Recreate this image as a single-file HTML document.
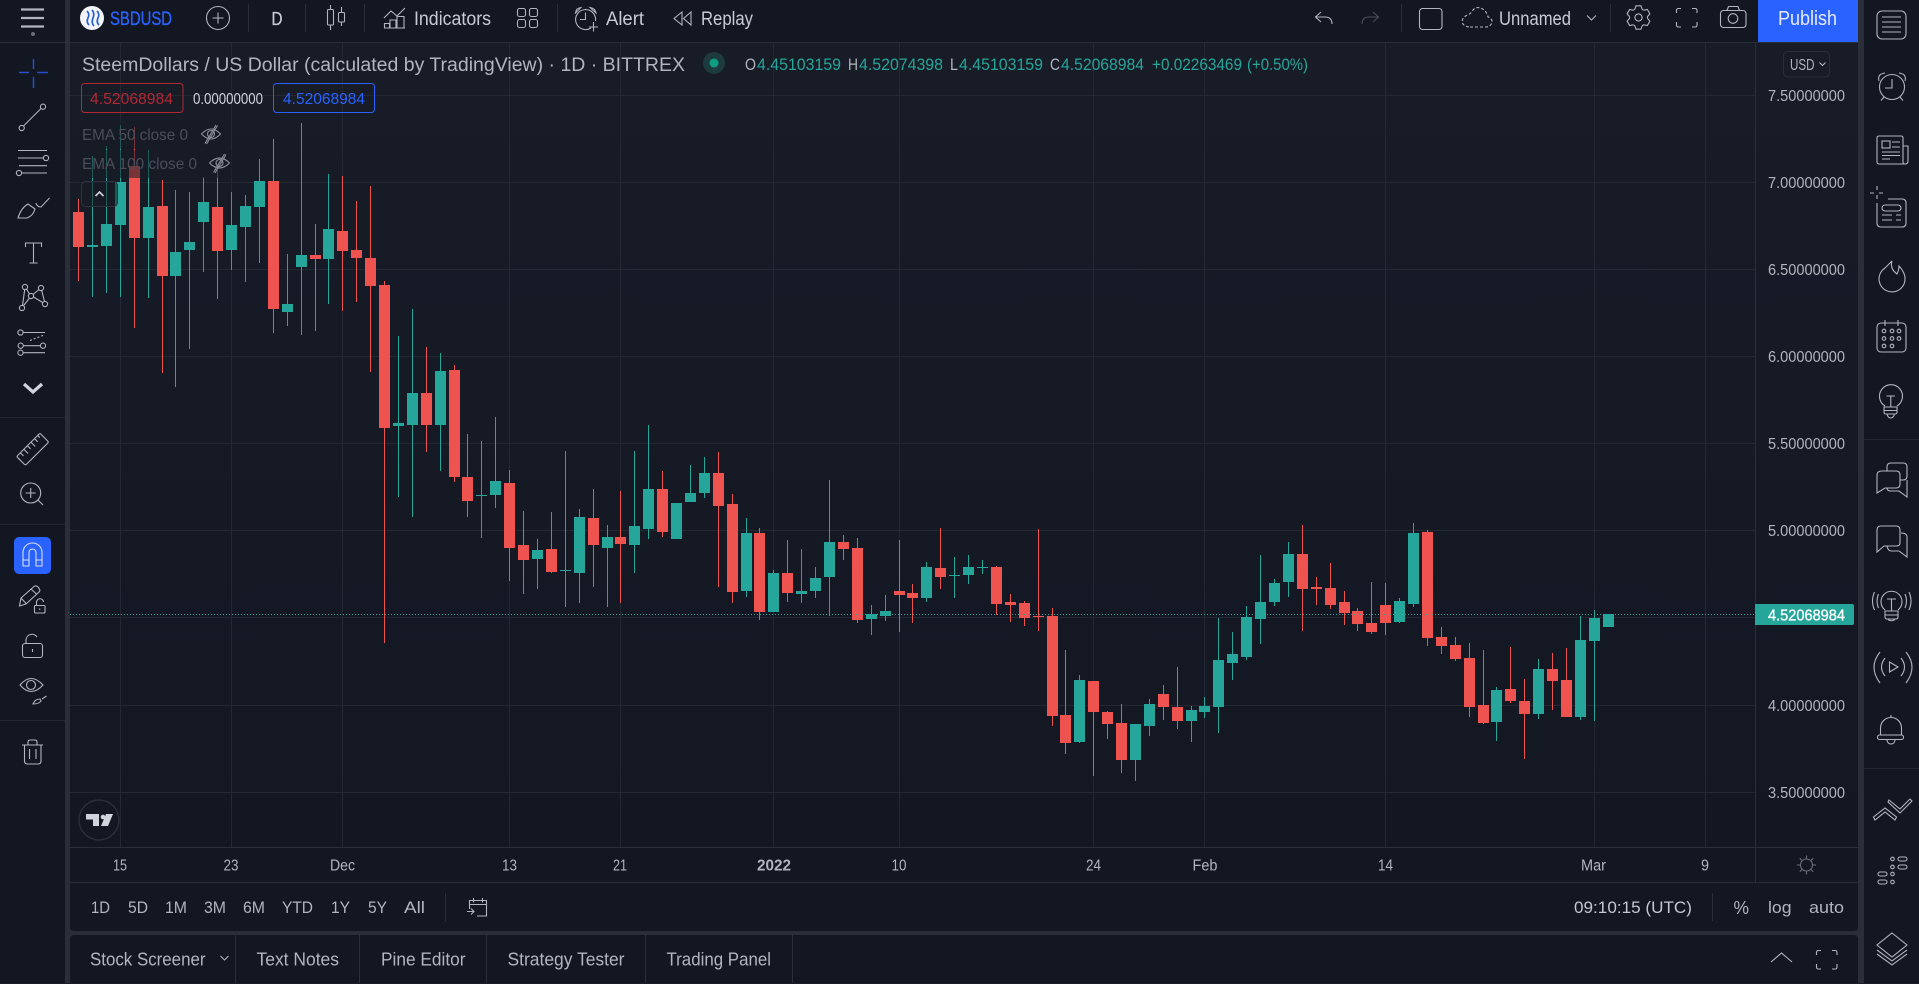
<!DOCTYPE html>
<html lang="en">
<head>
<meta charset="utf-8">
<title>SBDUSD</title>
<style>
html,body{margin:0;padding:0;background:#2a2e39;width:1919px;height:984px;overflow:hidden}
svg{display:block}
text{font-family:"Liberation Sans",Arial,sans-serif;white-space:pre}
.i{fill:none;stroke:#b2b5be;stroke-width:1.1}
.g{stroke:#2a2e39;stroke-width:1;fill:none}
.gs{stroke:#222631;stroke-width:1;fill:none}
.gw{stroke:#242833;stroke-width:1;fill:none;shape-rendering:crispEdges}
.p{font-size:16px;fill:#b2b5be}
.m{font-size:15.5px;fill:#b2b5be;text-anchor:middle}
.r{font-size:17px;fill:#b2b5be}
.b{font-size:18px;fill:#b2b5be}
.tb{font-size:19px;fill:#c8cbd3}
.up{font-size:16.5px;fill:#26a69a}
.lb{font-size:16.5px;fill:#b2b5be}
</style>
</head>
<body>
<svg width="1919" height="984" viewBox="0 0 1919 984" xmlns="http://www.w3.org/2000/svg">
<defs>
<linearGradient id="bg" x1="0" y1="0" x2="0" y2="1"><stop offset="0" stop-color="#181c27"/><stop offset="1" stop-color="#131722"/></linearGradient>
</defs>
<rect width="1919" height="984" fill="#2a2e39"/>
<!-- toolbars -->
<rect x="0" y="0" width="65" height="984" fill="#131722"/>
<rect x="70" y="0" width="1788" height="42" fill="#131722"/>
<rect x="1864" y="0" width="55" height="984" fill="#131722"/>
<!-- chart -->
<rect x="70" y="43" width="1788" height="804" fill="url(#bg)"/>
<rect x="70" y="848" width="1788" height="34" fill="#131722"/>
<path d="M70 883H1858V927q0 4-4 4H74q-4 0-4-4Z" fill="#131722"/>
<path d="M70 984V939q0-4 4-4H1854q4 0 4 4V984Z" fill="#131722"/>
<!-- grid -->
<g class="gw">
<path d="M70 95.5H1755M70 182.5H1755M70 269.5H1755M70 356.5H1755M70 443.5H1755M70 530.5H1755M70 617.5H1755M70 705.5H1755M70 792.5H1755"/>
<path d="M120.5 43V847M231.5 43V847M342.5 43V847M509.5 43V847M620.5 43V847M773.5 43V847M899.5 43V847M1093.5 43V847M1204.5 43V847M1385.5 43V847M1594.5 43V847M1705.5 43V847"/>
</g>
<g style="shape-rendering:crispEdges">
<path class="g" d="M0 42.5H65M70 42.5H1858M70 847.5H1858M70 882.5H1858M1755.5 43V882"/>
<path class="gs" d="M0 417.5H65M0 524.5H65M0 720.5H65M1864 439.5H1919M1864 768.5H1919"/>
<path class="g" d="M445.5 893V921M1712.5 893V921M248.5 4V32M305.5 4V32M364.5 4V32M557.5 4V32M1401.5 4V32M1610.5 4V32M235.5 935V984M359.5 935V984M486.5 935V984M645.5 935V984M792.5 935V984"/>
</g>
<!-- candles -->
<g style="shape-rendering:crispEdges">
<g transform="translate(60 120) scale(.33333)">
<path fill="none" stroke="#26a69a" stroke-width="3" d="M97.5 108V531M139.5 78V519M181.5 15V531M265.5 90V534M346.5 210V801M388.5 216V687M430.5 171V456M514.5 216V450M556.5 225V486M598.5 117V429M682.5 402V618M724.5 9V645M805.5 162V552"/>
<path fill="#26a69a" d="M81 375h33V381h-33zM123 312h33V378h-33zM165 186h33V315h-33zM249 261h33V354h-33zM330 396h33V468h-33zM372 366h33V390h-33zM414 246h33V306h-33zM498 315h33V390h-33zM540 258h33V321h-33zM582 183h33V261h-33zM666 552h33V576h-33zM708 405h33V441h-33zM789 327h33V417h-33z"/>
<path fill="none" stroke="#ef5350" stroke-width="3" d="M55.5 237V483M223.5 21V624M307.5 180V759M472.5 150V537M640.5 57V639M766.5 312V633M847.5 168V573M889.5 243V546M931.5 198V756"/>
<path fill="#ef5350" d="M39 276h33V381h-33zM207 138h33V354h-33zM291 258h33V468h-33zM456 261h33V393h-33zM624 183h33V567h-33zM750 405h33V417h-33zM831 333h33V393h-33zM873 390h33V414h-33zM915 414h33V498h-33z"/>
</g>
<g transform="translate(360 280) scale(.33333)">
<path fill="none" stroke="#26a69a" stroke-width="3" d="M115.5 168V651M157.5 87V711M241.5 219V573M364.5 483V774M406.5 411V684M532.5 777V927M616.5 513V981M658.5 687V969M742.5 735V981M823.5 513V879M865.5 435V777M991.5 555V666M1033.5 531V654M1159.5 714V951M1240.5 870V996M1324.5 807V969M1366.5 861V954M1408.5 600V1008"/>
<path fill="#26a69a" d="M99 429h33V438h-33zM141 339h33V435h-33zM225 273h33V435h-33zM348 645h33V648h-33zM390 603h33V645h-33zM516 810h33V837h-33zM600 870h33V873h-33zM642 711h33V879h-33zM726 771h33V804h-33zM807 738h33V795h-33zM849 627h33V747h-33zM933 669h33V777h-33zM975 639h33V666h-33zM1017 579h33V639h-33zM1143 759h33V933h-33zM1224 879h33V996h-33zM1308 933h33V942h-33zM1350 894h33V933h-33zM1392 786h33V891h-33z"/>
<path fill="none" stroke="#ef5350" stroke-width="3" d="M73.5 3V1089M199.5 201V516M283.5 255V606M322.5 462V711M448.5 570V903M490.5 693V942M574.5 696V879M700.5 627V921M781.5 633V969M907.5 573V771M1075.5 516V921M1117.5 642V969M1198.5 744V1020M1282.5 780V966M1450.5 765V840M1492.5 774V1029"/>
<path fill="#ef5350" d="M57 15h33V444h-33zM183 339h33V435h-33zM267 270h33V591h-33zM306 591h33V663h-33zM432 609h33V804h-33zM474 795h33V840h-33zM558 807h33V876h-33zM684 714h33V795h-33zM765 771h33V792h-33zM891 627h33V756h-33zM1059 579h33V678h-33zM1101 672h33V936h-33zM1182 759h33V996h-33zM1266 879h33V939h-33zM1434 786h33V807h-33zM1476 804h33V1020h-33z"/>
</g>
<g transform="translate(860 500) scale(.33333)">
<path fill="none" stroke="#26a69a" stroke-width="3" d="M34.5 315V405M76.5 285V363M199.5 186V306M283.5 171V294M325.5 165V252M367.5 180V222M658.5 525V729M826.5 672V843M868.5 597V708M994.5 618V726M1033.5 591V654M1075.5 354V699M1117.5 396V540M1159.5 318V480M1201.5 165V432M1243.5 237V318M1285.5 126V291"/>
<path fill="#26a69a" d="M18 342h33V357h-33zM60 333h33V348h-33zM183 201h33V294h-33zM267 225h33V228h-33zM309 201h33V225h-33zM351 201h33V204h-33zM642 540h33V726h-33zM810 672h33V780h-33zM852 612h33V678h-33zM978 630h33V663h-33zM1017 618h33V636h-33zM1059 480h33V621h-33zM1101 462h33V489h-33zM1143 351h33V471h-33zM1185 306h33V357h-33zM1227 249h33V306h-33zM1269 162h33V246h-33z"/>
<path fill="none" stroke="#ef5350" stroke-width="3" d="M118.5 120V396M157.5 252V369M241.5 84V267M409.5 198V345M451.5 282V366M493.5 303V378M535.5 87V393M577.5 324V678M616.5 450V762M700.5 543V828M742.5 633V717M784.5 612V819M910.5 555V660M952.5 501V687M1327.5 75V393M1369.5 231V315M1411.5 189V327M1453.5 273V375M1492.5 324V393M1534.5 246V402"/>
<path fill="#ef5350" d="M102 273h33V285h-33zM141 279h33V294h-33zM225 204h33V231h-33zM393 201h33V312h-33zM435 306h33V315h-33zM477 309h33V354h-33zM519 348h33V351h-33zM561 348h33V648h-33zM600 645h33V729h-33zM684 543h33V636h-33zM726 636h33V672h-33zM768 669h33V780h-33zM894 582h33V621h-33zM936 621h33V663h-33zM1311 162h33V267h-33zM1353 261h33V267h-33zM1395 264h33V315h-33zM1437 306h33V339h-33zM1476 333h33V372h-33zM1518 369h33V396h-33z"/>
</g>
<g transform="translate(1380 500) scale(.33333)">
<path fill="none" stroke="#26a69a" stroke-width="3" d="M58.5 294V369M100.5 69V321M349.5 561V723M475.5 477V657M601.5 348V660M643.5 330V663"/>
<path fill="#26a69a" d="M42 303h33V366h-33zM84 99h33V312h-33zM333 570h33V666h-33zM459 507h33V642h-33zM585 420h33V651h-33zM627 354h33V423h-33zM669 342h33V381h-33z"/>
<path fill="none" stroke="#ef5350" stroke-width="3" d="M16.5 249V405M142.5 90V438M184.5 381V462M226.5 411V483M268.5 429V651M310.5 450V672M391.5 441V609M433.5 537V777M517.5 459V630M559.5 444V651"/>
<path fill="#ef5350" d="M0 315h33V369h-33zM126 96h33V414h-33zM168 411h33V438h-33zM210 435h33V477h-33zM252 474h33V621h-33zM294 615h33V669h-33zM375 567h33V603h-33zM417 603h33V642h-33zM501 507h33V543h-33zM543 540h33V651h-33z"/>
</g>
<path d="M70 614.5H1755" stroke="#26a69a" stroke-width="1" stroke-dasharray="1 2" fill="none"/>
</g>
<!-- legend backdrop -->
<rect x="80" y="121" width="146" height="28" fill="#181c27" fill-opacity=".55"/>
<rect x="80" y="150" width="155" height="28" fill="#181c27" fill-opacity=".55"/>
<rect x="81.5" y="181.5" width="36" height="25" rx="4" fill="#181c27" fill-opacity=".55" stroke="#2f333e"/>
<path d="M95.5 196l4-4 4 4" fill="none" stroke="#d1d4dc" stroke-width="1.6"/>
<!-- top bar: left -->
<g>
<path d="M21 9.5H44M21 18H44M21 26.5H44" stroke="#b2b5be" stroke-width="2.2" fill="none"/>
<circle cx="33" cy="34" r="2" fill="#6a6d78"/>
<circle cx="92" cy="18" r="12" fill="#f3f5fa"/>
<path d="M87 11q3 3 1 7t1 7M92 10q3 3 1 8t1 8M97 11q3 3 1 7t1 7" fill="none" stroke="#2a62c8" stroke-width="1.7"/>
<text x="110" y="25" font-size="19" fill="#2962ff" stroke="#2962ff" stroke-width=".35" textLength="62" lengthAdjust="spacingAndGlyphs">SBDUSD</text>
<circle class="i" cx="218" cy="18" r="11.5"/>
<path class="i" d="M218 12.5V23.5M212.5 18H223.5"/>
<text x="271.5" y="25" font-size="18.5" fill="#c8cbd3" stroke="#c8cbd3" stroke-width=".3" textLength="11" lengthAdjust="spacingAndGlyphs">D</text>
<path class="i" d="M330.5 5V9M330.5 25V30M341.5 7V12M341.5 22V26"/>
<rect class="i" x="327.5" y="9.5" width="6" height="15.5" rx="1"/>
<rect class="i" x="338.5" y="12.5" width="6" height="9.5" rx="1"/>
<path class="i" d="M384 18L391 11L397 16L405 8"/>
<path class="i" d="M384.5 28V23.5H389.5V28M390 28V20H396V28M397 28V16.5H404V28M384 28H405"/>
<text x="414" y="25" class="tb" textLength="77" lengthAdjust="spacingAndGlyphs">Indicators</text>
<rect class="i" x="517.5" y="8.5" width="8" height="8" rx="2"/><rect class="i" x="529.5" y="8.5" width="8" height="8" rx="2"/>
<rect class="i" x="517.5" y="19.5" width="8" height="8" rx="2"/><rect class="i" x="529.5" y="19.5" width="8" height="8" rx="2"/>
<path class="i" d="M591 28A10 10 0 1 1 595.5 21M585.5 12.5V19.5H580M575.5 13Q576 8 581 7.5ZM590 7.5Q595 8 596 13ZM593.5 22V31.5M589 27H598"/>
<text x="606" y="25" class="tb" textLength="38" lengthAdjust="spacingAndGlyphs">Alert</text>
<path class="i" d="M682 12L674 18.5L682 25ZM691 12L683.5 18.5L691 25Z"/>
<text x="701" y="25" class="tb" textLength="52" lengthAdjust="spacingAndGlyphs">Replay</text>
</g>
<!-- top bar: right -->
<g>
<path class="i" d="M1321 12L1315.5 17L1321 22M1316 17H1325Q1332 17 1332 24"/>
<path d="M1373 12L1378.5 17L1373 22M1378 17H1369Q1362 17 1362 24" fill="none" stroke="#4a4e5a" stroke-width="1.1"/>
<rect class="i" x="1419.5" y="8.5" width="22.5" height="21" rx="3" stroke="#9598a1"/>
<path class="i" stroke-dasharray="3 2" d="M1470 27H1486C1492 27 1495 19 1488 17C1487 10 1478 4 1473 10C1471 13 1470 14 1468 15C1460 17 1460 27 1470 27Z"/>
<text x="1499" y="25" class="tb" textLength="72" lengthAdjust="spacingAndGlyphs">Unnamed</text>
<path class="i" d="M1587 15.5L1591.5 20L1596 15.5"/>
<g transform="translate(1638.5 17.5)">
<path class="i" d="M-3.7-8.2L-2.5-11.7H2.5L3.7-8.2L5.25-7.3"/>
<path class="i" transform="rotate(60)" d="M-3.7-8.2L-2.5-11.7H2.5L3.7-8.2L5.25-7.3"/>
<path class="i" transform="rotate(120)" d="M-3.7-8.2L-2.5-11.7H2.5L3.7-8.2L5.25-7.3"/>
<path class="i" transform="rotate(180)" d="M-3.7-8.2L-2.5-11.7H2.5L3.7-8.2L5.25-7.3"/>
<path class="i" transform="rotate(240)" d="M-3.7-8.2L-2.5-11.7H2.5L3.7-8.2L5.25-7.3"/>
<path class="i" transform="rotate(300)" d="M-3.7-8.2L-2.5-11.7H2.5L3.7-8.2L5.25-7.3"/>
<circle class="i" r="3.6"/>
</g>
<path class="i" d="M1676.5 13V10.5q0-2 2-2H1681M1692 8.5h3q2 0 2 2V13M1697 22v3q0 2-2 2h-3M1681 27h-2.5q-2 0-2-2V22"/>
<rect class="i" x="1720.5" y="10.5" width="25.5" height="17" rx="3"/>
<path class="i" d="M1727 10.5l1.5-4h9.500l1.5 4"/>
<circle class="i" cx="1733" cy="18.5" r="4.8"/>
<rect x="1758" y="0" width="100" height="42" fill="#2962ff"/>
<text x="1778" y="25" font-size="20" fill="#e6e9f5" textLength="59" lengthAdjust="spacingAndGlyphs">Publish</text>
</g>
<!-- legend -->
<g>
<text x="82" y="71" font-size="19" fill="#b2b5be" textLength="603" lengthAdjust="spacingAndGlyphs">SteemDollars / US Dollar (calculated by TradingView) · 1D · BITTREX</text>
<circle cx="714" cy="63" r="11" fill="#1d3a3e"/>
<circle cx="714" cy="63" r="4.5" fill="#0e9d80"/>
<text x="745" y="70" class="lb" textLength="11" lengthAdjust="spacingAndGlyphs">O</text>
<text x="757" y="70" class="up" textLength="84" lengthAdjust="spacingAndGlyphs">4.45103159</text>
<text x="848" y="70" class="lb" textLength="10" lengthAdjust="spacingAndGlyphs">H</text>
<text x="859" y="70" class="up" textLength="84" lengthAdjust="spacingAndGlyphs">4.52074398</text>
<text x="950" y="70" class="lb" textLength="8" lengthAdjust="spacingAndGlyphs">L</text>
<text x="959" y="70" class="up" textLength="84" lengthAdjust="spacingAndGlyphs">4.45103159</text>
<text x="1050" y="70" class="lb" textLength="10" lengthAdjust="spacingAndGlyphs">C</text>
<text x="1061" y="70" class="up" textLength="83" lengthAdjust="spacingAndGlyphs">4.52068984</text>
<text x="1152" y="70" class="up" textLength="90" lengthAdjust="spacingAndGlyphs">+0.02263469</text>
<text x="1247" y="70" class="up" textLength="61" lengthAdjust="spacingAndGlyphs">(+0.50%)</text>
<rect x="81.5" y="83.5" width="101.5" height="29" rx="3" fill="none" stroke="#b22833"/>
<text x="90" y="104" font-size="16" fill="#b22833" textLength="83" lengthAdjust="spacingAndGlyphs">4.52068984</text>
<text x="193" y="104" font-size="15.5" fill="#d1d4dc" textLength="70" lengthAdjust="spacingAndGlyphs">0.00000000</text>
<rect x="273.5" y="83.5" width="101" height="29" rx="3" fill="none" stroke="#2962ff"/>
<text x="283" y="104" font-size="16" fill="#2962ff" textLength="82" lengthAdjust="spacingAndGlyphs">4.52068984</text>
<text x="82" y="140" font-size="16" fill="#4a4e59" textLength="106" lengthAdjust="spacingAndGlyphs">EMA 50 close 0</text>
<text x="82" y="169" font-size="16" fill="#4a4e59" textLength="115" lengthAdjust="spacingAndGlyphs">EMA 100 close 0</text>
<g fill="none" stroke="#8d9099" stroke-width="1.1">
<path d="M201.5 134Q211 124 220.500 134Q211 144 201.5 134Z"/><circle cx="211" cy="134" r="3.5"/><path d="M205 143.5L216 125M206.5 144L217.5 125.5"/>
<path d="M209.5 163Q219.5 153 229.5 163Q219.5 173 209.5 163Z"/><circle cx="219.5" cy="163" r="3.5"/><path d="M213.5 172.5L224.5 154M215 173L226 154.5"/>
</g>
</g>
<!-- USD + price scale -->
<rect x="1783.5" y="51.5" width="46" height="25.5" rx="4" fill="none" stroke="#2a2e39"/>
<text x="1790" y="70" font-size="15.5" fill="#b2b5be" textLength="24.5" lengthAdjust="spacingAndGlyphs">USD</text>
<path d="M1819.5 62.5l3 3 3-3" fill="none" stroke="#b2b5be" stroke-width="1.1"/>
<g>
<text class="p" x="1768" y="101" textLength="77" lengthAdjust="spacingAndGlyphs">7.50000000</text>
<text class="p" x="1768" y="188" textLength="77" lengthAdjust="spacingAndGlyphs">7.00000000</text>
<text class="p" x="1768" y="275" textLength="77" lengthAdjust="spacingAndGlyphs">6.50000000</text>
<text class="p" x="1768" y="362" textLength="77" lengthAdjust="spacingAndGlyphs">6.00000000</text>
<text class="p" x="1768" y="449" textLength="77" lengthAdjust="spacingAndGlyphs">5.50000000</text>
<text class="p" x="1768" y="536" textLength="77" lengthAdjust="spacingAndGlyphs">5.00000000</text>
<text class="p" x="1768" y="711" textLength="77" lengthAdjust="spacingAndGlyphs">4.00000000</text>
<text class="p" x="1768" y="798" textLength="77" lengthAdjust="spacingAndGlyphs">3.50000000</text>
</g>
<path d="M1755 604H1852q2 0 2 2V623q0 2-2 2H1755Z" fill="#26a69a"/>
<text x="1768" y="620.5" font-size="16" fill="#fff" stroke="#fff" stroke-width=".3" textLength="77" lengthAdjust="spacingAndGlyphs">4.52068984</text>
<!-- TV logo -->
<circle cx="99" cy="820" r="20" fill="#131722" stroke="#2a2e39" stroke-width="1.5"/>
<path d="M86 814H99V826H93V819.5H86ZM106 814H113L108 826H101Z" fill="#d1d4dc"/>
<circle cx="103" cy="817" r="2.3" fill="#d1d4dc"/>
<!-- time axis -->
<g>
<text class="m" x="120" y="870.5" textLength="14" lengthAdjust="spacingAndGlyphs">15</text>
<text class="m" x="231" y="870.5" textLength="15" lengthAdjust="spacingAndGlyphs">23</text>
<text class="m" x="342.5" y="870.5" textLength="25" lengthAdjust="spacingAndGlyphs">Dec</text>
<text class="m" x="509.5" y="870.5" textLength="15" lengthAdjust="spacingAndGlyphs">13</text>
<text class="m" x="620" y="870.5" textLength="14" lengthAdjust="spacingAndGlyphs">21</text>
<text class="m" x="774" y="870.5" font-weight="700" fill="#c8cbd3" textLength="34" lengthAdjust="spacingAndGlyphs">2022</text>
<text class="m" x="899" y="870.5" textLength="15" lengthAdjust="spacingAndGlyphs">10</text>
<text class="m" x="1093.5" y="870.5" textLength="15" lengthAdjust="spacingAndGlyphs">24</text>
<text class="m" x="1205" y="870.5" textLength="25" lengthAdjust="spacingAndGlyphs">Feb</text>
<text class="m" x="1385.5" y="870.5" textLength="15" lengthAdjust="spacingAndGlyphs">14</text>
<text class="m" x="1593.5" y="870.5" textLength="25" lengthAdjust="spacingAndGlyphs">Mar</text>
<text class="m" x="1705" y="870.5" textLength="8" lengthAdjust="spacingAndGlyphs">9</text>
</g>
<g fill="none" stroke="#6a6d78" stroke-width="1.1">
<circle cx="1806.5" cy="865" r="6"/>
<path d="M1806.5 855.5V858.5M1806.5 871.5V874.5M1797 865H1800M1813 865H1816M1799.8 858.3L1802 860.5M1811 869.5L1813.2 871.7M1813.2 858.3L1811 860.5M1802 869.5L1799.8 871.7"/>
</g>
<!-- range bar -->
<g>
<text class="r" x="91" y="913" textLength="19" lengthAdjust="spacingAndGlyphs">1D</text>
<text class="r" x="128" y="913" textLength="20" lengthAdjust="spacingAndGlyphs">5D</text>
<text class="r" x="165" y="913" textLength="22" lengthAdjust="spacingAndGlyphs">1M</text>
<text class="r" x="204" y="913" textLength="22" lengthAdjust="spacingAndGlyphs">3M</text>
<text class="r" x="243" y="913" textLength="22" lengthAdjust="spacingAndGlyphs">6M</text>
<text class="r" x="282" y="913" textLength="31" lengthAdjust="spacingAndGlyphs">YTD</text>
<text class="r" x="331" y="913" textLength="19" lengthAdjust="spacingAndGlyphs">1Y</text>
<text class="r" x="368" y="913" textLength="19" lengthAdjust="spacingAndGlyphs">5Y</text>
<text class="r" x="404" y="913" textLength="21" lengthAdjust="spacingAndGlyphs">All</text>
<path class="i" d="M469.5 909V900.5H486.5V916H477M469.5 904.5H486.5M473.5 898V902.500M482.500 898V902.500M467 911.500H474M471 908.500L474 911.500L471 914.500"/>
<text x="1574" y="913" font-size="17" fill="#c3c7d2" textLength="118" lengthAdjust="spacingAndGlyphs">09:10:15 (UTC)</text>
<text x="1733.5" y="914" font-size="18" fill="#b2b5be" textLength="15.5" lengthAdjust="spacingAndGlyphs">%</text>
<text class="r" x="1768" y="913" textLength="23.5" lengthAdjust="spacingAndGlyphs">log</text>
<text class="r" x="1809" y="913" textLength="35" lengthAdjust="spacingAndGlyphs">auto</text>
</g>
<!-- bottom tabs -->
<g>
<text class="b" x="90" y="965.5" textLength="115.5" lengthAdjust="spacingAndGlyphs">Stock Screener</text>
<path class="i" d="M220.5 956l4 4 4-4"/>
<text class="b" x="256.5" y="965.5" textLength="82.5" lengthAdjust="spacingAndGlyphs">Text Notes</text>
<text class="b" x="381" y="965.5" textLength="84.5" lengthAdjust="spacingAndGlyphs">Pine Editor</text>
<text class="b" x="507.5" y="965.5" textLength="117" lengthAdjust="spacingAndGlyphs">Strategy Tester</text>
<text class="b" x="666.5" y="965.5" textLength="104.5" lengthAdjust="spacingAndGlyphs">Trading Panel</text>
<path class="i" d="M1771 962L1781.5 953L1792 962"/>
<path class="i" d="M1816.5 955V952.5q0-2 2-2H1821M1832 950.5h3q2 0 2 2V955M1837 964v3q0 2-2 2h-3M1821 969h-2.5q-2 0-2-2V964"/>
</g>
<path d="M0 983.5H1919" stroke="#1a1e29" stroke-width="1"/>
<!-- left toolbar icons -->
<g>
<path d="M19 72.5H29M37 72.5H48M33.5 59V69M33.5 77V88" fill="none" stroke="#2450c8" stroke-width="1.5"/>
<g class="i">
<circle cx="21.7" cy="128" r="2.6"/><circle cx="43" cy="106.7" r="2.6"/><path d="M23.5 126L41 108.5"/>
<path d="M18 150.5H47M18 158H43.5M19 165.7H47M22 173H47"/><circle cx="46" cy="158" r="2.6"/><circle cx="19" cy="173" r="2.6"/>
<path d="M18 218Q21 208 28 204L35 209Q33 216 27 218ZM36 203Q37 207 41 207L49.5 198"/>
<path d="M25.5 247V243H41.5V247M33.5 243V263M29.5 263H37.5"/>
<circle cx="25" cy="287" r="2.6"/><circle cx="41" cy="288" r="2.6"/><circle cx="31" cy="296" r="2.6"/><circle cx="45" cy="304" r="2.6"/><circle cx="22" cy="308" r="2.6"/>
<path d="M24.7 289.500L22.5 305.5M26.5 289L29.5 294M33 294.5L39 289.5M41.7 290.5L44.5 301.5M33.5 297L42.7 302.5M29.5 298L23.7 305.5"/>
<circle cx="20.5" cy="332.5" r="2.6"/><path d="M23 332.5H45"/><path d="M30 340.5L44 335" stroke-dasharray="2 2"/>
<circle cx="20.7" cy="345.7" r="2.6"/><circle cx="43" cy="345.7" r="2.6"/><path d="M23.3 345.7H40.4"/>
<circle cx="20.5" cy="352.7" r="2.6"/><path d="M23 352.7H45"/>
</g>
<path d="M24 384L33 392L42 384" fill="none" stroke="#d1d4dc" stroke-width="3.2"/>
<g class="i">
<g transform="rotate(-45 32.7 449.3)"><rect x="16.2" y="443" width="33" height="12.5" rx="1.5"/><path d="M21.5 443V447.5M26.5 443V449M31.5 443V447.5M36.5 443V449M41.5 443V447.5M46 443V446"/></g>
<circle cx="30.7" cy="493" r="10"/><path d="M30.7 488V498M25.7 493H35.7M38 500L43 505"/>
</g>
<rect x="14" y="537" width="37" height="37" rx="5" fill="#2962ff"/>
<path d="M23 566V552.5a9.5 9.5 0 0 1 19 0V566h-6V552.5a3.5 3.5 0 0 0-7 0V566ZM23 560H29M36 560H42" fill="none" stroke="#d7def5" stroke-width="1.1"/>
<g class="i">
<path d="M19.5 606L21 598L34 586.5Q36 585 38 587L39.5 589Q40.5 591 38.5 592.5L26 604ZM21 598L26.5 604M31 589L37 594.5"/>
<rect x="34.5" y="605.5" width="10.5" height="7.5" rx="1"/><path d="M36.5 605.5V602.5a3.5 3.5 0 0 1 7-.5M39.7 608.5V610"/>
<rect x="22.5" y="643.5" width="20" height="14" rx="2.5"/><path d="M26 643.5V640a6 6 0 0 1 11-3M32.5 649V652"/>
<path d="M20 685Q31 672 43 685Q31 698 20 685Z"/><circle cx="31" cy="685" r="4.5"/>
<path d="M33 704Q35 699 40 699L41 701Q39 704 33 704ZM42 699L46.5 696"/>
<path d="M22 745H43M28 745V742q0-2 2-2H35q2 0 2 2V745M24.5 745V761q0 3 3 3H38q3 0 3-3V745M29.5 749V759M36 749V759"/>
</g>
</g>
<!-- right toolbar icons -->
<g class="i">
<rect x="1877" y="11" width="29" height="28" rx="5"/><path d="M1882 17H1901M1882 22H1901M1882 27H1901M1882 32H1901"/>
<circle cx="1892" cy="87" r="12.5"/><path d="M1892 79V88H1885M1879 81Q1877 74 1885 73M1905 81Q1907 74 1899 73M1884 97L1881 100.5M1900 97L1903 100.5"/>
<path d="M1903 162V138q0-2-2-2H1879q-2 0-2 2V162q0 2 2 2H1905q3 0 3-3V146H1903M1903 162q0 2 2 2"/>
<rect x="1882" y="141" width="8" height="7"/><path d="M1892 142H1900M1892 147H1900M1882 152H1900M1882 155.5H1900M1882 159H1890"/>
<path d="M1870 193H1874M1879 193H1883M1877 186V190M1877 195V199M1888 199H1902q4 0 4 4V223q0 4-4 4H1881q-4 0-4-4V203"/>
<rect x="1882" y="205" width="19" height="6" rx="3"/><path d="M1882 215H1892M1896 215H1901M1882 220H1892M1896 220H1901"/>
<path d="M1892 261C1890 267 1893 271 1897 274C1899 270 1899 268 1899 266C1903 270 1905 275 1905 278A13 13 0 1 1 1885 268Q1888 265 1892 261Z"/>
<rect x="1877" y="323" width="29" height="29" rx="4"/><path d="M1885 320V326M1898 320V326"/>
<circle cx="1884" cy="331" r="1.8"/><circle cx="1892" cy="331" r="1.8"/><circle cx="1899" cy="331" r="1.8"/>
<circle cx="1884" cy="338.5" r="1.8"/><circle cx="1892" cy="338.5" r="1.8"/><circle cx="1899" cy="338.5" r="1.8"/>
<circle cx="1884" cy="346" r="1.8"/><circle cx="1892" cy="346" r="1.8"/>
<path d="M1885 406A11.5 11.5 0 1 1 1897 406M1886.5 396H1895M1890.8 396V407M1884 407H1897V412q0 2-2 2H1886q-2 0-2-2ZM1884 410.5H1897M1887 414Q1888 418 1890.8 418Q1893.5 418 1894.5 414"/>
<path d="M1882 471H1896q4 0 4 4V484q0 4-4 4H1885L1877 493V475q0-4 5-4ZM1887 471V467q0-4 4-4H1903q4 0 4 4V476q0 4-4 4H1900M1887 488q0 3 4 3H1899L1907 497V480"/>
<path d="M1881 526H1896q4 0 4 4V543q0 3-4 3H1884L1877 552V530q0-4 4-4ZM1901 533q6 0 6 4V557L1899 551H1891q-3 0-4-5"/>
<path d="M1885 610A10.5 10.5 0 1 1 1898 610M1887 599H1896M1891.5 599V611M1885 611H1898V617q0 2-2 2H1887q-2 0-2-2ZM1885 615H1898M1888 619.5Q1891.5 622 1895 619.5M1874.5 592Q1870.5 601 1874.5 610M1878.5 594Q1875.5 601 1878.5 608M1909 592Q1913 601 1909 610M1905 594Q1908 601 1905 608"/>
<path d="M1889.5 662L1898 667L1889.5 672ZM1880 652Q1868 667 1880 683M1885 658Q1878 667 1885 676M1906 652Q1918 667 1906 683M1901 658Q1908 667 1901 676"/>
<path d="M1880.5 735V728a10.5 10.5 0 0 1 21 0V735M1891 715V717.5M1887 740a4 4 0 0 0 8 0"/><rect x="1877.5" y="735" width="26" height="4.5" rx="2"/>
<path d="M1873.5 817L1885 808L1896.5 817L1895 820L1885 812L1875 820ZM1889 800L1900 809L1910 799L1912 801L1900 813L1888 802Z"/>
<circle cx="1892.5" cy="859" r="1.8"/><circle cx="1892.5" cy="867" r="1.8"/><circle cx="1892.5" cy="874" r="1.8"/><circle cx="1892.5" cy="882" r="1.8"/>
<rect x="1898" y="857" width="9" height="4" rx="2"/><rect x="1898" y="865" width="9" height="4" rx="2"/><rect x="1878" y="872" width="9" height="4" rx="2"/><rect x="1878" y="880" width="9" height="4" rx="2"/>
<path d="M1892 933L1907 945L1892 957L1877 945ZM1877 950L1892 961L1907 950M1877 954L1892 965L1907 954"/>
</g>
</svg>
</body>
</html>
